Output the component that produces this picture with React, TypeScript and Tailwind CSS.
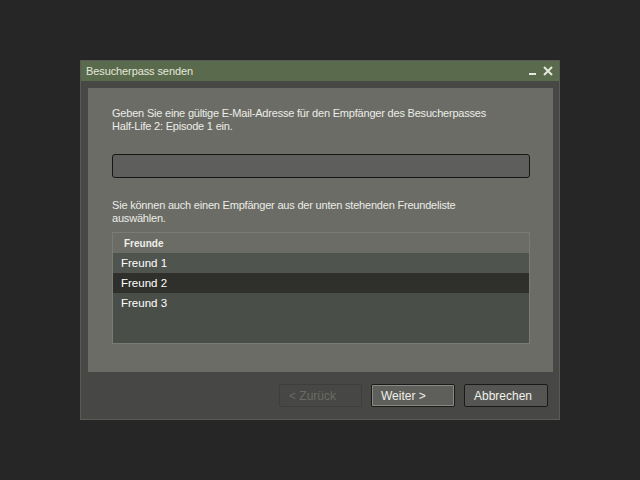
export default function App() {
  return (
    <div
      className="w-[640px] h-[480px] bg-[#262626] pt-[60px] pl-[80px]"
      style={{ fontFamily: '"Liberation Sans", Arial, sans-serif' }}
    >
      <div className="w-[480px] h-[360px] bg-[#474745] border border-[#5a5a57] flex flex-col">
        {/* title bar */}
        <div className="h-[20px] bg-[#5a6a4c] flex items-center justify-between px-[5px] text-[11px] tracking-[-0.1px] text-[#e4e8dc]">
          <span>Besucherpass senden</span>
          <div className="flex items-center gap-[6px] pr-[1px]">
            <svg width="8" height="10" viewBox="0 0 8 10">
              <rect x="0" y="7" width="7" height="2" fill="#e4e8dc" />
            </svg>
            <svg width="10" height="10" viewBox="0 0 10 10">
              <path d="M1 1 L9 9 M9 1 L1 9" stroke="#e4e8dc" strokeWidth="2" />
            </svg>
          </div>
        </div>

        <div className="flex-1 flex flex-col pl-[7px] pr-[6px] pt-[7px]">
          <div className="h-[284px] bg-[#6b6c66] px-[24px] pt-[19px] text-[11px] tracking-[-0.2px] text-[#ecece6] leading-[13px]">
            <p>
              Geben Sie eine gültige E-Mail-Adresse für den Empfänger des Besucherpasses
              <br />
              Half-Life 2: Episode 1 ein.
            </p>

            <div className="mt-[21px] h-[24px] w-[418px] rounded-[3px] border border-[#161616] bg-[#5e5e5c]" />

            <p className="mt-[21px]">
              Sie können auch einen Empfänger aus der unten stehenden Freundeliste
              <br />
              auswählen.
            </p>

            <div className="mt-[7px] w-[418px] h-[112px] border border-[#7a7b75] bg-[#4a4e48] flex flex-col tracking-normal">
              <div className="h-[20px] bg-[#6b6c66] flex items-center pl-[11px] font-bold text-[10px] text-[#f0f0ea]">
                Freunde
              </div>
              <div className="h-[20px] bg-[#50544e] flex items-center pl-[8px] text-[11.5px] text-white">
                Freund 1
              </div>
              <div className="h-[20px] bg-[#2f302b] flex items-center pl-[8px] text-[11.5px] text-white">
                Freund 2
              </div>
              <div className="h-[20px] flex items-center pl-[8px] text-[11.5px] text-white">
                Freund 3
              </div>
            </div>
          </div>

          <div className="flex justify-end gap-[9px] mt-[12px] pr-[5px] text-[12px]">
            <button className="w-[83px] h-[23px] rounded-[2px] border border-[#3e3e3c] bg-[#474745] text-left pl-[9px] text-[#6a6a66]">
              &lt; Zurück
            </button>
            <button className="w-[84px] h-[23px] rounded-[2px] border border-[#1a1a1a] outline outline-1 outline-[#8a8a85] -outline-offset-2 bg-[#5e5f5a] text-left pl-[9px] text-[#f0f0ea]">
              Weiter &gt;
            </button>
            <button className="w-[84px] h-[23px] rounded-[2px] border border-[#1a1a1a] bg-[#555653] text-left pl-[9px] text-[#f0f0ea]">
              Abbrechen
            </button>
          </div>
        </div>
      </div>
    </div>
  );
}
